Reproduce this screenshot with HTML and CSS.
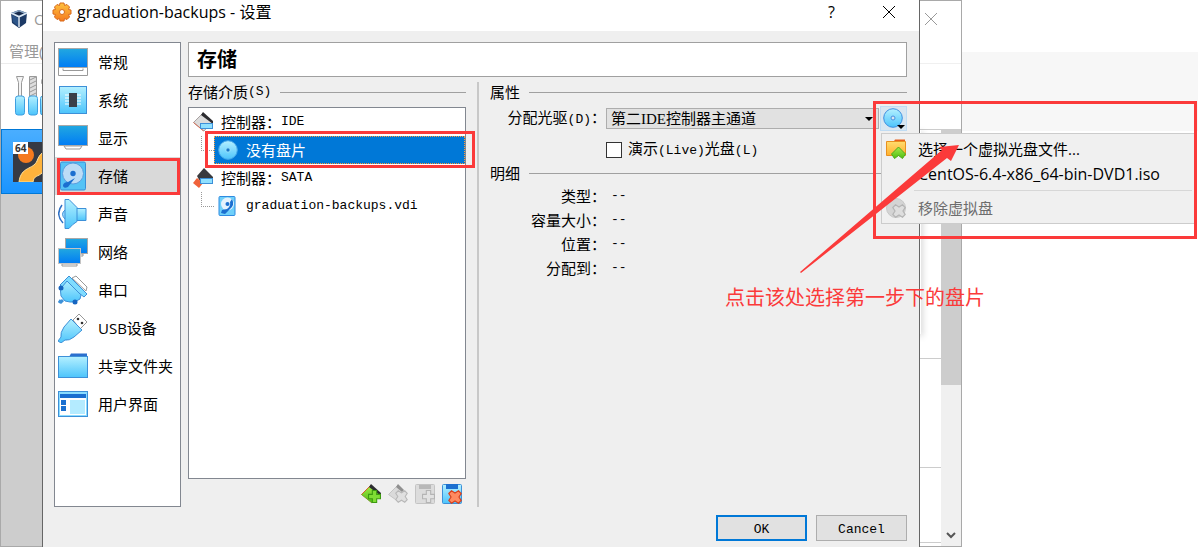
FILE: index.html
```
<!DOCTYPE html>
<html lang="zh-CN">
<head>
  <meta charset="UTF-8" />
  <meta name="viewport" content="width=device-width, initial-scale=1" />
  <title>graduation-backups - 设置</title>
  <link rel="stylesheet" href="styles.css">
</head>
<body>
  <!-- shared gradients and symbols -->
  <svg class="defs" width="0" height="0" aria-hidden="true">
    <defs>
      <linearGradient id="screen" x1="0" y1="0" x2="0" y2="1"><stop offset="0" stop-color="#22a8e0"/><stop offset="1" stop-color="#007cf5"/></linearGradient>
      <linearGradient id="aqua" x1="0" y1="0" x2="0" y2="1"><stop offset="0" stop-color="#b4f0ff"/><stop offset="1" stop-color="#4cc4fb"/></linearGradient>
      <linearGradient id="green" x1="0" y1="0" x2="0" y2="1"><stop offset="0" stop-color="#a6ea4a"/><stop offset="1" stop-color="#4fbd12"/></linearGradient>
      <linearGradient id="orange" x1="0" y1="0" x2="0" y2="1"><stop offset="0" stop-color="#ffc23e"/><stop offset="1" stop-color="#f57a1e"/></linearGradient>
      <linearGradient id="folder" x1="0" y1="0" x2="0" y2="1"><stop offset="0" stop-color="#ffdc6e"/><stop offset="1" stop-color="#ffb02e"/></linearGradient>
      <symbol id="disk" viewBox="0 0 30 30">
        <rect x="2.500" y="1" width="25" height="28" rx="1.500" fill="#55c3f5" stroke="#3a8fd8"/>
        <circle cx="15" cy="12.500" r="10.500" fill="#bcdcf6" stroke="#5a9ee0"/>
        <circle cx="15" cy="12.500" r="2.700" fill="#1b6fd0"/>
        <path d="M17 17 L10 26 Q5 28 5 24 Q6 21 10 21 Z" fill="#1b6fd0"/>
      </symbol>
      <symbol id="disk-small" viewBox="0 0 20 20">
        <rect x="1" y=".5" width="16" height="19" rx="1" fill="#6fd0fa" stroke="#2f8be0"/>
        <circle cx="9.500" cy="8" r="6.500" fill="#e4f2fd"/>
        <circle cx="9.500" cy="8" r="2" fill="#1b6fd0"/>
        <path d="M14 3q3 6-2 10l-5 5-4-1 1-3 5-1q4-3 3-7z" fill="#1b6fd0"/>
      </symbol>
      <symbol id="cd" viewBox="0 0 20 20">
        <circle cx="10" cy="10" r="9.300" fill="url(#aqua)" stroke="#47a8e8"/>
        <circle cx="10" cy="10" r="2.200" fill="#1b78c8" stroke="#9be6ff"/>
      </symbol>
      <symbol id="cd-light" viewBox="0 0 20 20">
        <circle cx="10" cy="10" r="9.300" fill="url(#aqua)" stroke="#3f8fe0"/>
        <circle cx="10" cy="10" r="2" fill="#d8e6f1" stroke="#4a90e0"/>
      </symbol>
      <symbol id="plus" viewBox="0 0 12 12"><path d="M4 .5h4V4h3.500v4H8v3.500H4V8H.5V4H4z"/></symbol>
      <symbol id="cross" viewBox="0 0 12 12"><path d="M.7 3 3 .7 6 2.600 9 .7 11.300 3 9.400 6l1.900 3L9 11.300 6 9.400 3 11.300.7 9 2.600 6z"/></symbol>
    </defs>
  </svg>

  <div class="page-band"></div>

  <!-- manager window behind the dialog -->
  <section class="manager">
    <div class="manager-left">
      <div class="manager-title">
        <svg width="18" height="20" viewBox="0 0 18 20"><path d="M9 1 17 4 16 14 9 19 2 14 1 4z" fill="#1d3a66"/><path d="M9 1 17 4 9 8 1 4z" fill="#8aa6c4"/><path d="M4 4.500 9 2.500l5 2L9 6.500z" fill="#17294a"/><path d="M2 6l6 3v8L3 13z" fill="#2c5488"/><path d="M9 8v10M1 4l8 4 8-4" stroke="#dce8f4" stroke-width="1.500" fill="none"/></svg>
        <span>O</span>
      </div>
      <div class="manager-menu">管理(</div>
      <div class="manager-tools">
        <svg width="36" height="42" viewBox="0 0 36 42"><g stroke="#999" fill="#f4f4f4"><path d="M1.500 1.500h7l-2 6v14h-3v-14z"/><path d="M14.500 1.500h7v20h-7z" fill="#ddd"/><path d="M31 1a6 6 0 0 0-4 8l3 3v9h6V1z"/></g><path d="M15 5l6-3M15 9l6-3M15 13l6-3M15 17l6-3M15 21l6-3" stroke="#999"/><g fill="url(#aqua)" stroke="#3e9fe0"><rect x=".5" y="21" width="9" height="19" rx="2.500"/><rect x="13.500" y="21" width="9" height="19" rx="2.500"/><rect x="25.500" y="21" width="9" height="19" rx="2.500"/></g></svg>
      </div>
      <div class="manager-list">
        <div class="vm">
          <svg width="40" height="40" viewBox="0 0 40 40"><rect width="40" height="40" fill="#363a44"/><circle cx="13" cy="13" r="8" fill="#f57a1e"/><path d="M6 40C8 24 20 28 24 19c3-8 6-10 16-11v11c-7 2-7 7-11 12-4 4-8 2-9 9z" fill="#ffb33c" stroke="#ffe09a"/></svg>
          <span class="vm-bits">64</span>
        </div>
      </div>
    </div>
    <div class="manager-right">
      <div class="manager-close"><svg width="14" height="14" viewBox="0 0 14 14"><path d="M1 1l12 12M13 1L1 13" stroke="#999"/></svg></div>
      <div class="manager-gap"></div>
      <div class="manager-pane">
        <div class="pane-rows">
          <div class="pane-row first"><div class="pane-shadow"></div></div>
          <div class="pane-row second"></div>
          <div class="pane-row third"></div>
        </div>
        <div class="scrollbar">
          <div class="thumb"></div>
          <svg width="10" height="7" viewBox="0 0 10 7"><path d="M1 1l4 4 4-4" stroke="#555" stroke-width="2" fill="none"/></svg>
        </div>
      </div>
    </div>
  </section>

  <!-- settings dialog -->
  <section class="dialog">
    <header class="titlebar">
      <svg width="20" height="20" viewBox="0 0 20 20"><g fill="url(#orange)" stroke="#d86a1c"><path d="M8 1h4l.5 2.500 2.500-1 2.500 2.500-1 2.500 2.500.5v4l-2.500.5 1 2.500-2.500 2.500-2.500-1L12 19H8l-.5-2.500-2.500 1L2.500 15l1-2.500L1 12V8l2.500-.5-1-2.500L5 2.500l2.500 1z"/><circle cx="10" cy="10" r="2.500" fill="#fff"/></g></svg>
      <h1>graduation-backups - 设置</h1>
      <button type="button" class="title-btn" aria-label="帮助">?</button>
      <button type="button" class="title-btn" aria-label="关闭"><svg width="14" height="14" viewBox="0 0 14 14"><path d="M1 1l12 12M13 1L1 13" stroke="#000"/></svg></button>
    </header>

    <div class="dialog-body">
      <nav class="sidebar">
        <a href="#"><svg width="30" height="30" viewBox="0 0 30 30"><path d="M.5 20.500h29v8H.5z" fill="#fff" stroke="#999"/><path d="M5 21.500v2h20v-2" fill="none" stroke="#999"/><rect x=".5" y="1.500" width="29" height="19" fill="url(#screen)" stroke="#a8a8a8"/></svg>常规</a>
        <a href="#"><svg width="30" height="30" viewBox="0 0 30 30"><rect x="1.500" y="1.500" width="27" height="27" fill="url(#aqua)" stroke="#3d90d8"/><path d="M7 10h16M7 13h16M7 16h16M7 19h16" stroke="#fff"/><rect x="11" y="8" width="8" height="14" fill="#3a3e48"/></svg>系统</a>
        <a href="#"><svg width="30" height="30" viewBox="0 0 30 30"><path d="M6 23h18l-2 3H8z" fill="#fff" stroke="#999"/><rect x=".5" y="2.500" width="29" height="20" fill="url(#screen)" stroke="#a8a8a8"/></svg>显示</a>
        <a href="#" class="current"><svg width="30" height="30"><use href="#disk"/></svg>存储</a>
        <a href="#"><svg width="30" height="30" viewBox="0 0 30 30"><g fill="url(#aqua)" stroke="#3d90d8"><path d="M18 9.500h10v12H18z"/><path d="M7 11q-5 4 0 9" fill="#9ddcff"/><path d="M7 .5h4l8 8v14q-5 3-8 7H7z"/></g><path d="M4 6q-7 9 1 18" fill="none" stroke="#2d6fc4" stroke-width="1.500"/></svg>声音</a>
        <a href="#"><svg width="30" height="30" viewBox="0 0 30 30"><path d="M13 17h12v2H13z" fill="#fff" stroke="#999"/><rect x="7.500" y="1.500" width="22" height="15" fill="url(#screen)" stroke="#a8a8a8"/><path d="M4 27h15v2H4z" fill="#fff" stroke="#999"/><rect x=".5" y="11.500" width="22" height="15" fill="url(#screen)" stroke="#c4c4c4"/></svg>网络</a>
        <a href="#"><svg width="30" height="30" viewBox="0 0 30 30"><path d="M14 3l4-2 11 11-1 4z" fill="#fff" stroke="#999"/><path d="M3 25l-2 3M5 25l-3 3" stroke="#3d90d8" stroke-width="3"/><path d="M8 5l15 15-1 4q-5 4-10 3l-5-1-4-5q-1-6 0-9z" fill="url(#aqua)" stroke="#3d90d8"/><path d="M11 1l18 18-3 3-5-4-12-12-5 6-2-2z" fill="#7fdcff" stroke="#3d90d8"/><circle cx="3" cy="13" r="2.500" fill="#1765c0"/><circle cx="17" cy="27" r="2.500" fill="#1765c0"/></svg>串口</a>
        <a href="#"><svg width="30" height="30" viewBox="0 0 30 30"><path d="M15 7l6-6 8 8-7 7z" fill="#fff" stroke="#999"/><circle cx="20" cy="6" r="1.300" fill="#333"/><circle cx="24" cy="10" r="1.300" fill="#333"/><path d="M13 6l11 11-8 7q-5 4-9 3l-4 3-3-2 3-4q-1-4 3-10z" fill="url(#aqua)" stroke="#3d90d8"/></svg>USB设备</a>
        <a href="#"><svg width="30" height="30" viewBox="0 0 30 30"><path d="M11 6l2-3.500h16V6z" fill="#2b6fce"/><rect x=".5" y="5.500" width="29" height="21" fill="url(#aqua)" stroke="#3d90d8"/></svg>共享文件夹</a>
        <a href="#"><svg width="30" height="30" viewBox="0 0 30 30"><rect x=".5" y="2.500" width="29" height="25" fill="#8adcff" stroke="#3d90d8"/><path d="M2 9h26v17H2z" fill="#fff"/><path d="M2 5h26v4H2zM3 11h5v5H3zM3 17h5v5H3z" fill="#1b6fd0"/><path d="M12 11h15v14H12z" fill="#b4ebff"/></svg>用户界面</a>
      </nav>

      <main class="content">
        <h2 class="page-title">存储</h2>
        <div class="columns">
          <section class="media">
            <h3 class="group-title">存储介质<span class="en">(S)</span></h3>
            <ul class="tree">
              <li class="controller">
                <svg width="20" height="20" viewBox="0 0 20 20"><path d="M10 1l9 9-8 9L.5 10.500z" fill="#dcdcdc" stroke="#a8a0a0"/><path d="M.5 10.500l10 8.500" stroke="#d87058"/><path d="M10 0l10 9v3L8 3z" fill="#2c2c30"/><rect x="7.500" y="11.500" width="12" height="5" fill="#8fe0ff" stroke="#3d90d8"/></svg>
                控制器：<span class="en">IDE</span>
              </li>
              <li class="medium selected"><i class="branch"></i>
                <span class="medium-label"><svg width="20" height="20"><use href="#cd"/></svg>没有盘片</span>
              </li>
              <li class="controller">
                <svg width="20" height="20" viewBox="0 0 20 20"><path d="M11 0l9 9v6H8L4 8z" fill="#3a3a3e"/><path d="M4 10l6 5-4 5-6-5z" fill="#f0623a"/><rect x="7.500" y="10.500" width="12" height="5" fill="#8fe0ff" stroke="#3d90d8"/></svg>
                控制器：<span class="en">SATA</span>
              </li>
              <li class="medium"><i class="branch"></i>
                <span class="medium-label"><svg width="20" height="20"><use href="#disk-small"/></svg><span class="en">graduation-backups.vdi</span></span>
              </li>
            </ul>
            <div class="tree-tools">
              <button type="button" aria-label="添加控制器"><svg width="20" height="20" viewBox="0 0 20 20"><path d="M10 1l9 9-8 9L.5 10.500z" fill="url(#green)" stroke="#7a9a2c"/><path d="M.5 10.500L10 1" stroke="#d8602c"/><path d="M10 0l10 9v3L8 3z" fill="#2c2c30"/><use href="#plus" x="7" y="6" width="13" height="13" fill="#7fdd34" stroke="#3c9a10"/></svg></button>
              <button type="button" aria-label="移除控制器"><svg width="20" height="20" viewBox="0 0 20 20"><path d="M10 1l7 8-6 9L.5 10.500z" fill="#dadada" stroke="#c4c4c4"/><path d="M10 0l6 6-2 2-6-5z" fill="#909090"/><use href="#cross" x="7" y="6" width="13" height="13" fill="#e0e0e0" stroke="#b8b8b8"/></svg></button>
              <button type="button" aria-label="添加虚拟盘"><svg width="20" height="20" viewBox="0 0 20 20"><rect x=".5" y=".5" width="19" height="19" rx="1" fill="#dcdcdc" stroke="#c4c4c4"/><path d="M4 1h12v4H4z" fill="#b8b8b8"/><use href="#plus" x="7" y="6" width="13" height="13" fill="#e2e2e2" stroke="#b4b4b4"/></svg></button>
              <button type="button" aria-label="移除虚拟盘"><svg width="20" height="20" viewBox="0 0 20 20"><rect x=".5" y=".5" width="19" height="19" rx="1" fill="url(#aqua)" stroke="#3d90d8"/><path d="M4 0h12v5H4z" fill="#1b6fd0"/><use href="#cross" x="6" y="6" width="14" height="14" fill="#ff8a60" stroke="#d8401c"/></svg></button>
            </div>
          </section>

          <section class="details">
            <h3 class="group-title">属性</h3>
            <div class="form">
              <label for="drive">分配光驱<span class="en">(D)</span>：</label>
              <div class="drive-row">
                <div class="combo">
                  <select id="drive"><option>第二IDE控制器主通道</option></select>
                </div>
                <button type="button" class="cd-btn" aria-label="选择虚拟光盘"><svg width="22" height="22" viewBox="0 0 22 22"><use href="#cd-light" width="20" height="20"/><path d="M14 17h8l-4 4z" fill="#000"/></svg></button>
              </div>
              <div class="check-row">
                <input type="checkbox" id="live"><label for="live">演示<span class="en">(Live)</span>光盘<span class="en">(L)</span></label>
              </div>
            </div>
            <h3 class="group-title">明细</h3>
            <dl class="info">
              <dt>类型：</dt><dd>--</dd>
              <dt>容量大小：</dt><dd>--</dd>
              <dt>位置：</dt><dd>--</dd>
              <dt>分配到：</dt><dd>--</dd>
            </dl>
          </section>
        </div>
      </main>
    </div>

    <footer class="dialog-footer">
      <button type="button" class="push default">OK</button>
      <button type="button" class="push">Cancel</button>
    </footer>
  </section>

  <!-- optical drive popup menu -->
  <div class="popup">
    <button type="button"><svg width="20" height="20" viewBox="0 0 20 20"><path d="M7 4l2-3.500h10V4z" fill="#e8601c"/><path d="M.5 2.500h19v14H.5z" fill="url(#folder)" stroke="#e89020"/><path d="M12.500 8l7 7-3 4.500-4-3-4 3-3-4.500z" fill="url(#green)" stroke="#4ea81c"/></svg>选择一个虚拟光盘文件...</button>
    <button type="button" class="recent"><i class="no-icon"></i>CentOS-6.4-x86_64-bin-DVD1.iso</button>
    <hr>
    <button type="button" disabled><svg width="20" height="20" viewBox="0 0 20 20"><circle cx="10" cy="10" r="9.500" fill="#d4d4d4" stroke="#c8c8c8"/><use href="#cross" x="6" y="6" width="14" height="14" fill="#dedede" stroke="#b4b4b4"/></svg>移除虚拟盘</button>
  </div>

  <!-- tutorial marks -->
  <div class="mark-frame"></div>
  <svg class="mark-arrow" width="160" height="128" viewBox="0 0 160 128"><path d="M159 0 151 16 147 13 1 128 0 127 142 5 139 2z" fill="#fb3a3a"/></svg>
  <p class="mark-text">点击该处选择第一步下的盘片</p>
</body>
</html>
```

FILE: styles.css
```
* {
  box-sizing: border-box;
  margin: 0;
  padding: 0;
}

body {
  position: relative;
  min-height: 100vh;
  overflow: hidden;
  background-color: #fff;
  color: #000;
  font-family: "Open Sans", "Noto Sans CJK SC", sans-serif;
  font-size: 15px;
  line-height: 20px;
}

svg {
  display: block;
  flex: none;
}

button {
  border: none;
  background: none;
  font: inherit;
  color: inherit;
}

.defs {
  position: absolute;
}

.page-band {
  margin-top: 52px;
  height: 79px;
  background-color: #f7f7f7;
}

/* Manager window */
.manager {
  position: absolute;
  top: 0;
  bottom: 0;
  left: 0;
  right: 236px;
  display: flex;
  justify-content: space-between;
  border: 1px solid #a9a9a9;
  background-color: #fff;
}

.manager-left {
  width: 48px;
  overflow: hidden;
  display: flex;
  flex-direction: column;
}

.manager-title {
  display: flex;
  gap: 6px;
  padding: 8px 0 0 9px;
  height: 40px;
  color: #999;
}

.manager-menu {
  height: 23px;
  padding-left: 8px;
  color: #999;
  white-space: nowrap;
  border-bottom: 1px solid #ececec;
}

.manager-tools {
  height: 65px;
  padding: 11px 0 0 14px;
}

.manager-list {
  flex: 1;
  background-color: #cdcdcd;
}

.vm {
  position: relative;
  height: 65px;
  padding: 12px 11px;
  border: 1px solid #0078d7;
  background: linear-gradient(#4aaeff, #1a94ff);
}

.vm-bits {
  position: absolute;
  top: 12px;
  left: 11px;
  padding: 0 2px;
  background-color: #fff;
  color: #333;
  font-size: 10px;
  font-weight: bold;
  line-height: 12px;
}

.manager-right {
  width: 41px;
  display: flex;
  flex-direction: column;
}

.manager-close {
  height: 63px;
  padding: 11px 4px;
  border-bottom: 1px solid #f0f0f0;
}

.manager-gap {
  height: 65px;
}

.manager-pane {
  flex: 1;
  display: flex;
  border-top: 1px solid #ccc;
}

.pane-rows {
  flex: 1;
}

.pane-row {
  border-bottom: 1px solid #ccc;
}

.pane-row.first {
  height: 229px;
}

.pane-row.second {
  height: 109px;
}

.pane-row.third {
  height: 75px;
}

.pane-shadow {
  width: 1px;
  height: 204px;
  box-shadow: 0 2px 6px #333;
}

.scrollbar {
  width: 20px;
  display: flex;
  flex-direction: column;
  justify-content: space-between;
  align-items: center;
  padding-bottom: 7px;
  background-color: #f0f0f0;
}

.thumb {
  width: 100%;
  height: 255px;
  background-color: #cdcdcd;
}

/* Settings dialog */
.dialog {
  position: absolute;
  top: 0;
  bottom: 0;
  left: 42px;
  right: 278px;
  display: flex;
  flex-direction: column;
  border: solid #666;
  border-width: 0 1px;
  background-color: #efefef;
}

.titlebar {
  display: flex;
  align-items: center;
  height: 31px;
  padding: 0 2px 7px 9px;
  background-color: #fff;
}

.titlebar h1 {
  flex: 1;
  padding-left: 5px;
  font-size: 16px;
  font-weight: normal;
}

.title-btn {
  display: flex;
  justify-content: center;
  width: 57px;
  font-size: 16px;
}

.dialog-body {
  flex: 1;
  display: flex;
  gap: 7px;
  padding: 11px 12px 0 11px;
}

.sidebar {
  width: 127px;
  border: 1px solid #828790;
  background-color: #fff;
}

.sidebar a {
  position: relative;
  display: flex;
  align-items: center;
  gap: 10px;
  height: 38px;
  padding-left: 3px;
  color: #000;
  text-decoration: none;
}

.sidebar .current {
  background-color: #d9d9d9;
}

.sidebar .current::after {
  content: "";
  position: absolute;
  inset: 1px 0 0 2px;
  border: 3px solid #fb3a3a;
}

.content {
  flex: 1;
  display: flex;
  flex-direction: column;
  gap: 5px;
}

.page-title {
  height: 35px;
  padding-left: 8px;
  border: 1px solid #a0a0a0;
  background-color: #fff;
  font-size: 20px;
  line-height: 33px;
}

.columns {
  flex: 1;
  display: flex;
}

.en {
  font-family: "Liberation Mono", monospace;
  font-size: 13px;
}

.media {
  display: flex;
  flex-direction: column;
  width: 289px;
  padding-right: 11px;
}

.group-title {
  display: flex;
  align-items: center;
  font-size: 15px;
  font-weight: normal;
  line-height: 20px;
}

.group-title::after {
  content: "";
  flex: 1;
  height: 1px;
  margin-left: 9px;
  background-color: #a0a0a0;
}

.tree {
  flex: 1;
  margin-top: 5px;
  border: 1px solid #828790;
  background-color: #fff;
  list-style: none;
}

.tree li {
  position: relative;
  display: flex;
  align-items: center;
  height: 28px;
}

.controller {
  padding-left: 4px;
}

.controller svg {
  margin-right: 8px;
}

.medium {
  padding-left: 12px;
}

.branch {
  width: 13px;
  height: 15px;
  margin-bottom: 13px;
  border: dotted #999;
  border-width: 0 0 1px 1px;
}

.medium-label {
  flex: 1;
  display: flex;
  align-items: center;
  gap: 8px;
  height: 28px;
  padding-left: 4px;
}

.selected .medium-label {
  background-color: #0078d7;
  color: #fff;
  outline: 1px dotted #ff9c3a;
  outline-offset: -1px;
}

.selected::after {
  content: "";
  position: absolute;
  inset: -5px -10px -4px 16px;
  border: 3px solid #fb3a3a;
}

.tree-tools {
  display: flex;
  justify-content: flex-end;
  gap: 7px;
  padding: 5px 4px 3px 0;
}

.details {
  flex: 1;
  padding-left: 11px;
  border-left: 2px solid #c8c8c8;
}

.form {
  display: grid;
  grid-template-columns: 116px 1fr;
  align-items: center;
  row-gap: 7px;
  padding: 4px 0 2px;
}

.form > label,
.info dt {
  text-align: right;
  white-space: nowrap;
}

.drive-row {
  display: flex;
  align-items: center;
  gap: 1px;
}

.combo {
  position: relative;
  flex: 1;
}

.combo select {
  display: block;
  width: 100%;
  height: 21px;
  padding-left: 4px;
  appearance: none;
  border: 1px solid #adadad;
  border-radius: 0;
  background-color: #e1e1e1;
  color: #000;
  font-family: "Liberation Serif", "Noto Sans CJK SC", serif;
  font-size: 15px;
}

.combo::after {
  content: "";
  position: absolute;
  top: 9px;
  right: 6px;
  border: 4px solid transparent;
  border-top-color: #000;
  border-bottom-width: 0;
}

.cd-btn {
  width: 27px;
  height: 25px;
  padding-left: 2px;
  border: 1px solid #c0dcf3;
  background-color: #d8e6f1;
}

.check-row {
  grid-column: 2;
  display: flex;
  align-items: center;
  gap: 6px;
}

.check-row input {
  appearance: none;
  width: 16px;
  height: 16px;
  border: 1px solid #333;
  background-color: #fff;
}

.info {
  display: grid;
  grid-template-columns: 116px 1fr;
  row-gap: 4px;
  padding-top: 3px;
}

.info dd {
  padding-left: 5px;
  font-family: "Liberation Mono", monospace;
  font-size: 13px;
}

.dialog-footer {
  display: flex;
  justify-content: flex-end;
  gap: 9px;
  padding: 8px 12px 6px;
}

.push {
  width: 91px;
  height: 26px;
  padding-top: 3px;
  border: 1px solid #adadad;
  background-color: #e1e1e1;
  font-family: "Liberation Mono", monospace;
  font-size: 13px;
}

.push.default {
  border: 2px solid #0078d7;
}

/* Popup menu */
.popup {
  position: absolute;
  top: 133px;
  right: 3px;
  width: 314px;
  padding: 2px 2px 3px;
  border: 1px solid #ccc;
  background-color: #f0f0f0;
}

.popup button {
  display: flex;
  align-items: center;
  gap: 12px;
  width: 100%;
  height: 25px;
  padding-left: 2px;
  white-space: nowrap;
}

.popup .recent {
  font-size: 16px;
}

.popup button:disabled {
  color: #6d6d6d;
}

.popup hr {
  margin: 4px 0 4px 30px;
  border: none;
  border-top: 1px solid #d7d7d7;
}

.no-icon {
  width: 20px;
}

/* Tutorial marks */
.mark-frame {
  position: absolute;
  top: 101px;
  right: 1px;
  width: 324px;
  height: 138px;
  border: 3px solid #fb3a3a;
}

.mark-arrow {
  position: absolute;
  top: 145px;
  right: 238px;
}

.mark-text {
  position: absolute;
  top: 286px;
  right: 213px;
  color: #fb3a3a;
  font-size: 20px;
  line-height: 24px;
  white-space: nowrap;
}
```
